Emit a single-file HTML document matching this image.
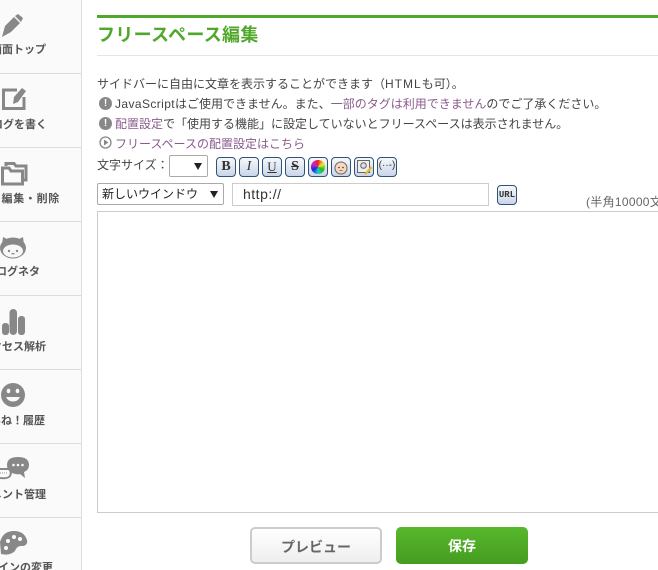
<!DOCTYPE html>
<html lang="ja"><head><meta charset="utf-8"><title>フリースペース編集</title>
<style>
*{box-sizing:border-box}
html,body{margin:0;padding:0;background:#fff}
body{width:658px;height:570px;overflow:hidden;position:relative;font-family:"Liberation Sans","Noto Sans CJK JP",sans-serif;font-size:12px;color:#444}
.a{position:absolute;white-space:nowrap}
#side{position:absolute;left:0;top:0;width:82px;height:570px;background:#fafafa;border-right:1px solid #ddd;overflow:hidden}
#side .d{position:absolute;left:0;width:81px;height:1px;background:#ddd}
#side .l{position:absolute;white-space:nowrap;font-size:11px;font-weight:bold;color:#555;line-height:14px;left:0;width:81px;overflow:hidden;height:14px}
#side .l span{position:absolute;white-space:nowrap}
#side svg{position:absolute;left:0;top:0}
.t{line-height:16px;height:16px}
.p{color:#8a5a8c}
.la{letter-spacing:.4px}
.b{position:absolute;top:157px;width:20px;height:20px;border:1px solid #2f5378;border-radius:4px;background:linear-gradient(#f6f8fc,#c9d5e8);font:bold 14px/18px "Liberation Serif",serif;text-align:center;color:#333;overflow:hidden}
.i{position:absolute;left:99px;width:13px;height:13px;border-radius:50%;background:#888;color:#fff;font:bold 10px/13px "Liberation Sans",sans-serif;text-align:center}
.tri{position:absolute;width:0;height:0;border-left:4px solid transparent;border-right:4px solid transparent;border-top:7px solid #222}
</style></head><body>
<div id="side">
<div class="d" style="top:73px"></div><div class="d" style="top:147px"></div><div class="d" style="top:221px"></div><div class="d" style="top:295px"></div><div class="d" style="top:369px"></div><div class="d" style="top:443px"></div><div class="d" style="top:517px"></div>
<svg width="81" height="570" viewBox="0 0 81 570" fill="#888">
<path d="M2 37 L5 26 L14 17 L20 23 L11 32Z"/><path d="M15 16 L18 14 L23 18 L21 22Z"/>
<path d="M17 90 H3.500 V108.500 H24 V97" fill="none" stroke="#888" stroke-width="3"/><path d="M13 104 L14 97 L22 88 L26 91 L18 102Z"/>
<path d="M2.500 168 H9 L11 171 H22.500 V184 H2.500Z" fill="none" stroke="#888" stroke-width="3"/><path d="M6 166 V163.500 H14 L16 166 H26 V180 H24" fill="none" stroke="#888" stroke-width="3"/>
<ellipse cx="13" cy="248" rx="13" ry="10.500"/><path d="M2 245 L3 237 L9 240Z M24 245 L23 237 L17 240Z"/><ellipse cx="13" cy="251" rx="10" ry="6.500" fill="#f8f8f8"/><circle cx="9" cy="251" r="1.200"/><circle cx="17" cy="251" r="1.200"/><rect x="11.500" y="253" width="3" height="1.300"/>
<rect x="2" y="323" width="7" height="12" rx="3"/><rect x="9.500" y="309" width="7.500" height="26" rx="3.700"/><rect x="18" y="316" width="7" height="19" rx="3"/>
<circle cx="13" cy="395" r="12"/><ellipse cx="8.500" cy="391" rx="1.800" ry="2.200" fill="#fafafa"/><ellipse cx="17.500" cy="391" rx="1.800" ry="2.200" fill="#fafafa"/><path d="M6 397 H20 Q18 401.500 13 401.500 Q8 401.500 6 397Z" fill="#fafafa"/>
<path d="M18 457 Q7 457 7 465 Q7 471 12 473 Q18 475 20 474 L25 478 L24 472 Q29 470 29 465 Q29 457 18 457Z"/><circle cx="13.500" cy="465" r="1.300" fill="#fafafa"/><circle cx="18" cy="465" r="1.300" fill="#fafafa"/><circle cx="22.500" cy="465" r="1.300" fill="#fafafa"/>
<path d="M0 469 H9 Q12 472 10 476 Q8 479 0 478" fill="#fafafa" stroke="#888" stroke-width="2"/><path d="M0 473 H8" stroke="#999" stroke-width="1" stroke-dasharray="1 1"/>
<path d="M14 531 Q3 531 0 542 L1 554 Q10 556 15 551 Q17 545 23 546 Q28 545 27 540 Q24 531 14 531Z"/><circle cx="8" cy="541" r="2" fill="#fafafa"/><circle cx="14" cy="537" r="2" fill="#fafafa"/><circle cx="20" cy="539" r="2" fill="#fafafa"/><circle cx="6" cy="548" r="2" fill="#fafafa"/>
</svg>
<div class="l" style="top:43px"><span style="right:35px">管理画面トップ</span></div>
<div class="l" style="top:118px"><span style="right:34px">ブログを書く</span></div>
<div class="l" style="top:192px"><span style="right:21px;letter-spacing:.7px">記事の編集・削除</span></div>
<div class="l" style="top:265px"><span style="right:41px">ブログネタ</span></div>
<div class="l" style="top:340px"><span style="right:35px">アクセス解析</span></div>
<div class="l" style="top:414px"><span style="right:36px">いいね！履歴</span></div>
<div class="l" style="top:488px"><span style="right:35px">コメント管理</span></div>
<div class="l" style="top:561px;height:9px"><span style="right:28px">デザインの変更</span></div>
</div>

<div class="a" style="left:97px;top:15px;width:561px;height:3px;background:#4fa82a"></div>
<div class="a" style="left:97px;top:24px;font-size:18px;line-height:22px;font-weight:bold;color:#4fa82a;letter-spacing:.3px">フリースペース編集</div>
<div class="a" style="left:97px;top:55px;width:561px;height:1px;background:#e5e5e5"></div>

<div class="a t" style="left:97px;top:76px">サイドバーに自由に文章を表示することができます（<span style="letter-spacing:1px">HTML</span>も可）。</div>
<div class="i" style="top:97px">!</div>
<div class="a t" style="left:115px;top:96px"><span class="la">JavaScript</span>はご使用できません。また、<span class="p">一部のタグは利用できません</span>のでご了承ください。</div>
<div class="i" style="top:117px">!</div>
<div class="a t" style="left:115px;top:116px"><span class="p">配置設定</span>で「使用する機能」に設定していないとフリースペースは表示されません。</div>
<svg class="a" style="left:99px;top:136px" width="13" height="13"><circle cx="6.500" cy="6.500" r="5.500" fill="none" stroke="#888" stroke-width="1.300"/><path d="M5 3.500 L9.500 6.500 L5 9.500Z" fill="#888"/></svg>
<div class="a t p" style="left:115px;top:136px">フリースペースの配置設定はこちら</div>

<div class="a t" style="left:97px;top:157px">文字サイズ：</div>
<div class="a" style="left:169px;top:155px;width:39px;height:22px;border:1px solid #aaa;border-radius:2px;background:#fff"><span class="tri" style="left:24px;top:7px"></span></div>
<div class="b" style="left:216px">B</div>
<div class="b" style="left:239px;font-style:italic;font-weight:normal">I</div>
<div class="b" style="left:262px;font-weight:normal;font-size:13px;text-decoration:underline">U</div>
<div class="b" style="left:285px;text-decoration:line-through">S</div>
<div class="b" style="left:308px"><div class="a" style="left:2px;top:2px;width:14px;height:14px;border-radius:50%;background:conic-gradient(#e22,#ee2,#2b2,#2cc,#22d,#c2c,#e22)"></div></div>
<div class="b" style="left:331px"><svg width="18" height="18" style="display:block"><circle cx="9" cy="10" r="6" fill="#f8d9c0" stroke="#666"/><circle cx="7" cy="9.500" r=".8" fill="#333"/><circle cx="11" cy="9.500" r=".8" fill="#333"/><path d="M7.500 12.500 H10.500" stroke="#a66"/></svg></div>
<div class="b" style="left:354px"><svg width="18" height="18" style="display:block"><rect x="2.500" y="2.500" width="12" height="12" fill="#eee" stroke="#666"/><circle cx="8.500" cy="7.500" r="2.800" fill="#ddd" stroke="#666"/><path d="M9 16 L16 8 L17.500 10 L11 17Z" fill="#e5b93a"/></svg></div>
<div class="b" style="left:377px;font:10px/16px 'Liberation Sans',sans-serif">(··-)</div>

<div class="a" style="left:97px;top:183px;width:127px;height:22px;border:1px solid #aaa;border-radius:2px;background:#fff;font-size:12px;line-height:20px;padding-left:4px;color:#222">新しいウインドウ<span class="tri" style="left:112px;top:7px"></span></div>
<div class="a" style="left:232px;top:183px;width:257px;height:23px;border:1px solid #ccc;background:#fff;font-size:14px;letter-spacing:.5px;line-height:21px;padding-left:10px;color:#333">http://</div>
<div class="b" style="left:497px;top:185px;width:20px;font:bold 9px/18px 'Liberation Mono',monospace">URL</div>
<div class="a" style="left:586px;top:194px;width:72px;overflow:hidden;line-height:16px;color:#666;letter-spacing:.3px">(半角10000文字まで)</div>

<div class="a" style="left:97px;top:211px;width:561px;height:302px;border:1px solid #ccc;border-right:0;background:#fff"></div>

<div class="a" style="left:250px;top:527px;width:132px;height:37px;border:2px solid #ccc;border-radius:5px;background:linear-gradient(#fff,#eee);text-align:center;line-height:36px;font-size:14px;font-weight:bold;color:#666">プレビュー</div>
<div class="a" style="left:396px;top:527px;width:132px;height:37px;border-radius:5px;background:linear-gradient(#57b82c,#469c20);text-align:center;line-height:38px;font-size:14px;font-weight:bold;color:#fff">保存</div>
</body></html>
